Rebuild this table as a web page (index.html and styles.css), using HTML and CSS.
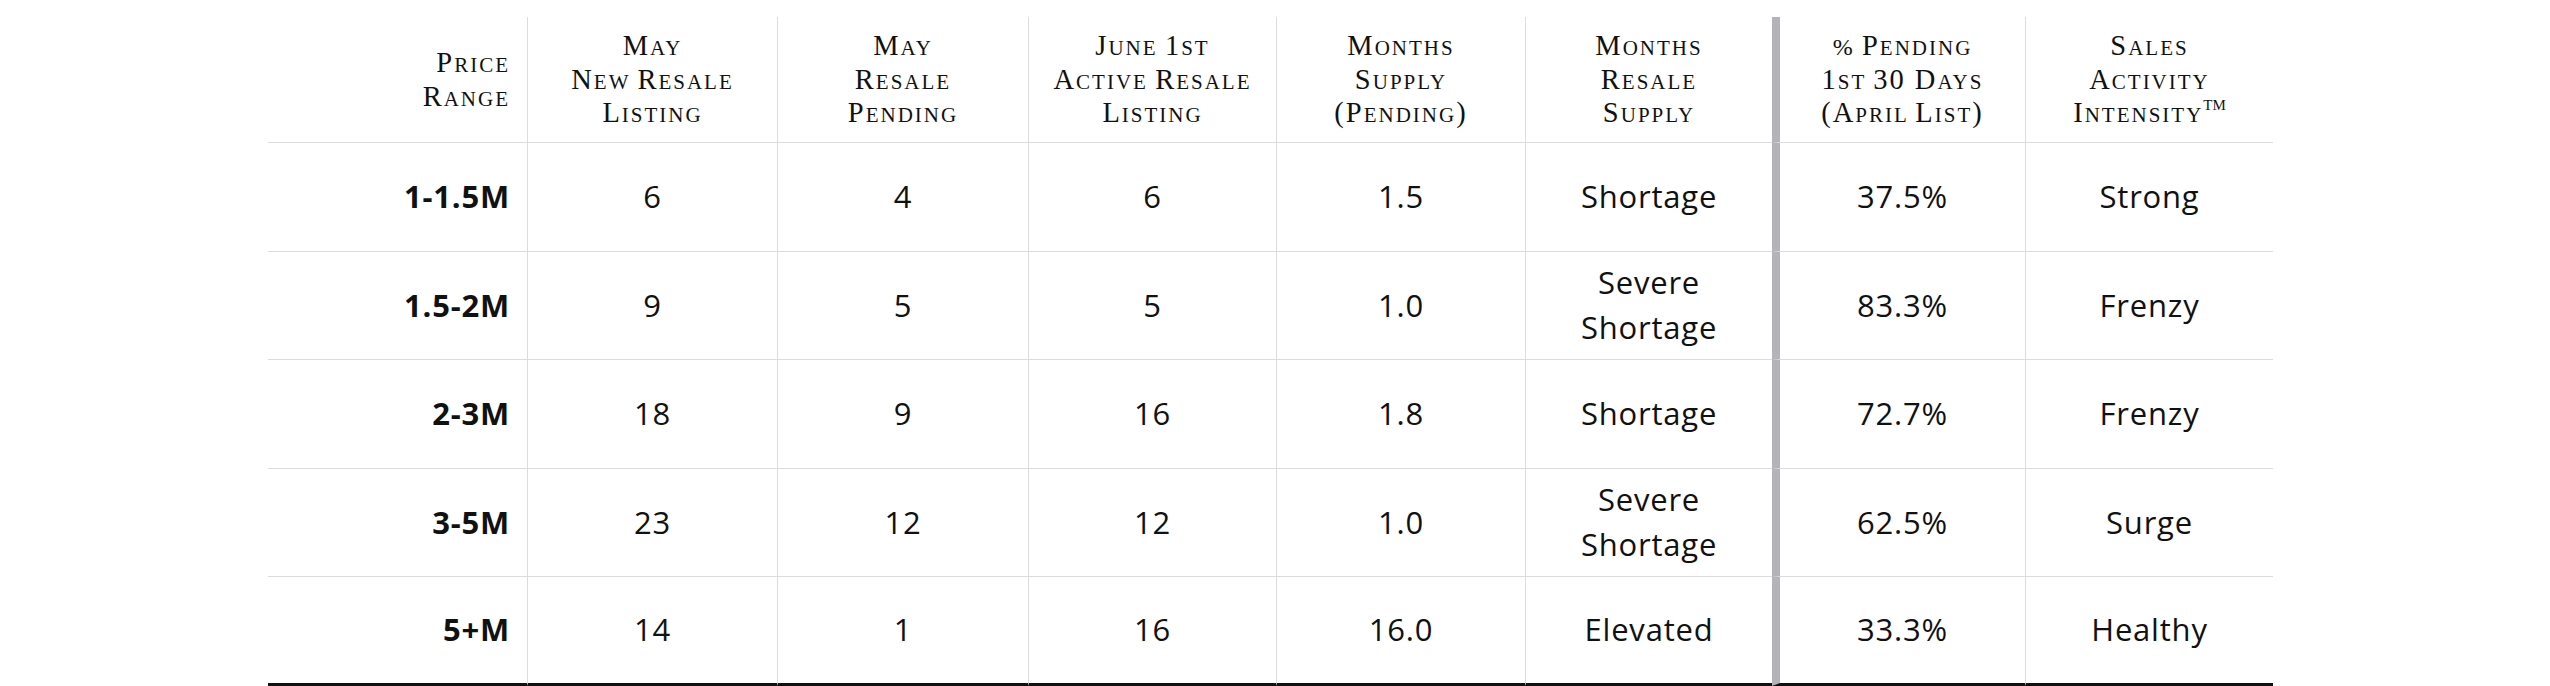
FILE: index.html
```html
<!DOCTYPE html>
<html lang="en">
<head>
<meta charset="utf-8">
<title>Resale Market Statistics</title>
<link rel="stylesheet" href="styles.css">
</head>
<body>
<div class="wrap">
<table class="stats">
<colgroup>
<col class="w1"><col class="w2"><col class="w3"><col class="w4"><col class="w5"><col class="w6"><col class="w7"><col class="w8">
</colgroup>
<thead>
<tr>
<th class="range"><span class="i">P</span>rice<br><span class="i">R</span>ange</th>
<th><span class="i">M</span>ay<br><span class="i">N</span>ew <span class="i">R</span>esale<br><span class="i">L</span>isting</th>
<th><span class="i">M</span>ay<br><span class="i">R</span>esale<br><span class="i">P</span>ending</th>
<th><span class="i">J</span>une <span class="i">1</span>st<br><span class="i">A</span>ctive <span class="i">R</span>esale<br><span class="i">L</span>isting</th>
<th><span class="i">M</span>onths<br><span class="i">S</span>upply<br><span class="i">(P</span>ending<span class="i">)</span></th>
<th><span class="i">M</span>onths<br><span class="i">R</span>esale<br><span class="i">S</span>upply</th>
<th class="split"><span class="pct">%</span> <span class="i">P</span>ending<br><span class="i">1</span>st <span class="i">30 D</span>ays<br><span class="i">(A</span>pril <span class="i">L</span>ist<span class="i">)</span></th>
<th><span class="i">S</span>ales<br><span class="i">A</span>ctivity<br><span class="i">I</span>ntensity<sup class="tm">TM</sup></th>
</tr>
</thead>
<tbody>
<tr>
<td class="range">1-1.5M</td><td>6</td><td>4</td><td>6</td><td>1.5</td><td>Shortage</td><td class="split">37.5%</td><td>Strong</td>
</tr>
<tr>
<td class="range">1.5-2M</td><td>9</td><td>5</td><td>5</td><td>1.0</td><td>Severe<br>Shortage</td><td class="split">83.3%</td><td>Frenzy</td>
</tr>
<tr>
<td class="range">2-3M</td><td>18</td><td>9</td><td>16</td><td>1.8</td><td>Shortage</td><td class="split">72.7%</td><td>Frenzy</td>
</tr>
<tr>
<td class="range">3-5M</td><td>23</td><td>12</td><td>12</td><td>1.0</td><td>Severe<br>Shortage</td><td class="split">62.5%</td><td>Surge</td>
</tr>
<tr>
<td class="range">5+M</td><td>14</td><td>1</td><td>16</td><td>16.0</td><td>Elevated</td><td class="split">33.3%</td><td>Healthy</td>
</tr>
</tbody>
</table>
</div>
</body>
</html>
```
FILE: styles.css
```css
html, body {
  margin: 0;
  padding: 0;
  background: #ffffff;
}

.wrap {
  padding: 17px 0 0 268px;
}

.stats {
  border-collapse: separate;
  border-spacing: 0;
  table-layout: fixed;
  width: 2005px;
}

.w1 { width: 259px; }
.w2 { width: 250px; }
.w3 { width: 251px; }
.w4 { width: 248px; }
.w5 { width: 249px; }
.w6 { width: 247px; }
.w7 { width: 253px; }
.w8 { width: 248px; }

.stats th,
.stats td {
  box-sizing: border-box;
  padding: 0;
  text-align: center;
  vertical-align: middle;
  border-bottom: 1px solid #dcdcdc;
}

.stats th + th,
.stats td + td {
  border-left: 1px solid #dcdcdc;
}

.stats th {
  height: 126px;
  padding-top: 6px;
  font-family: "Liberation Serif", "Times New Roman", serif;
  font-weight: normal;
  font-size: 21px;
  line-height: 33.5px;
  letter-spacing: 2px;
  text-transform: uppercase;
  color: #111111;
}

.stats th .i {
  font-size: 28.5px;
  line-height: 20px;
}

.stats th .pct {
  font-size: 24px;
  line-height: 20px;
}

.stats th .tm {
  font-size: 15px;
  letter-spacing: 0;
  vertical-align: 12px;
  line-height: 0;
}

.stats td {
  height: 108.5px;
  font-family: "Open Sans", "Noto Sans", sans-serif;
  font-size: 31px;
  line-height: 45px;
  letter-spacing: 0.8px;
  color: #111111;
}

.stats .range {
  text-align: right;
  padding-right: 17px;
}

.stats td.range {
  font-weight: bold;
  padding-right: 17px;
}

.stats th.split,
.stats td.split {
  border-left: 8px solid #b4b4b8;
}

.stats tbody tr:last-child td {
  border-bottom: 3px solid #111111;
}
```
